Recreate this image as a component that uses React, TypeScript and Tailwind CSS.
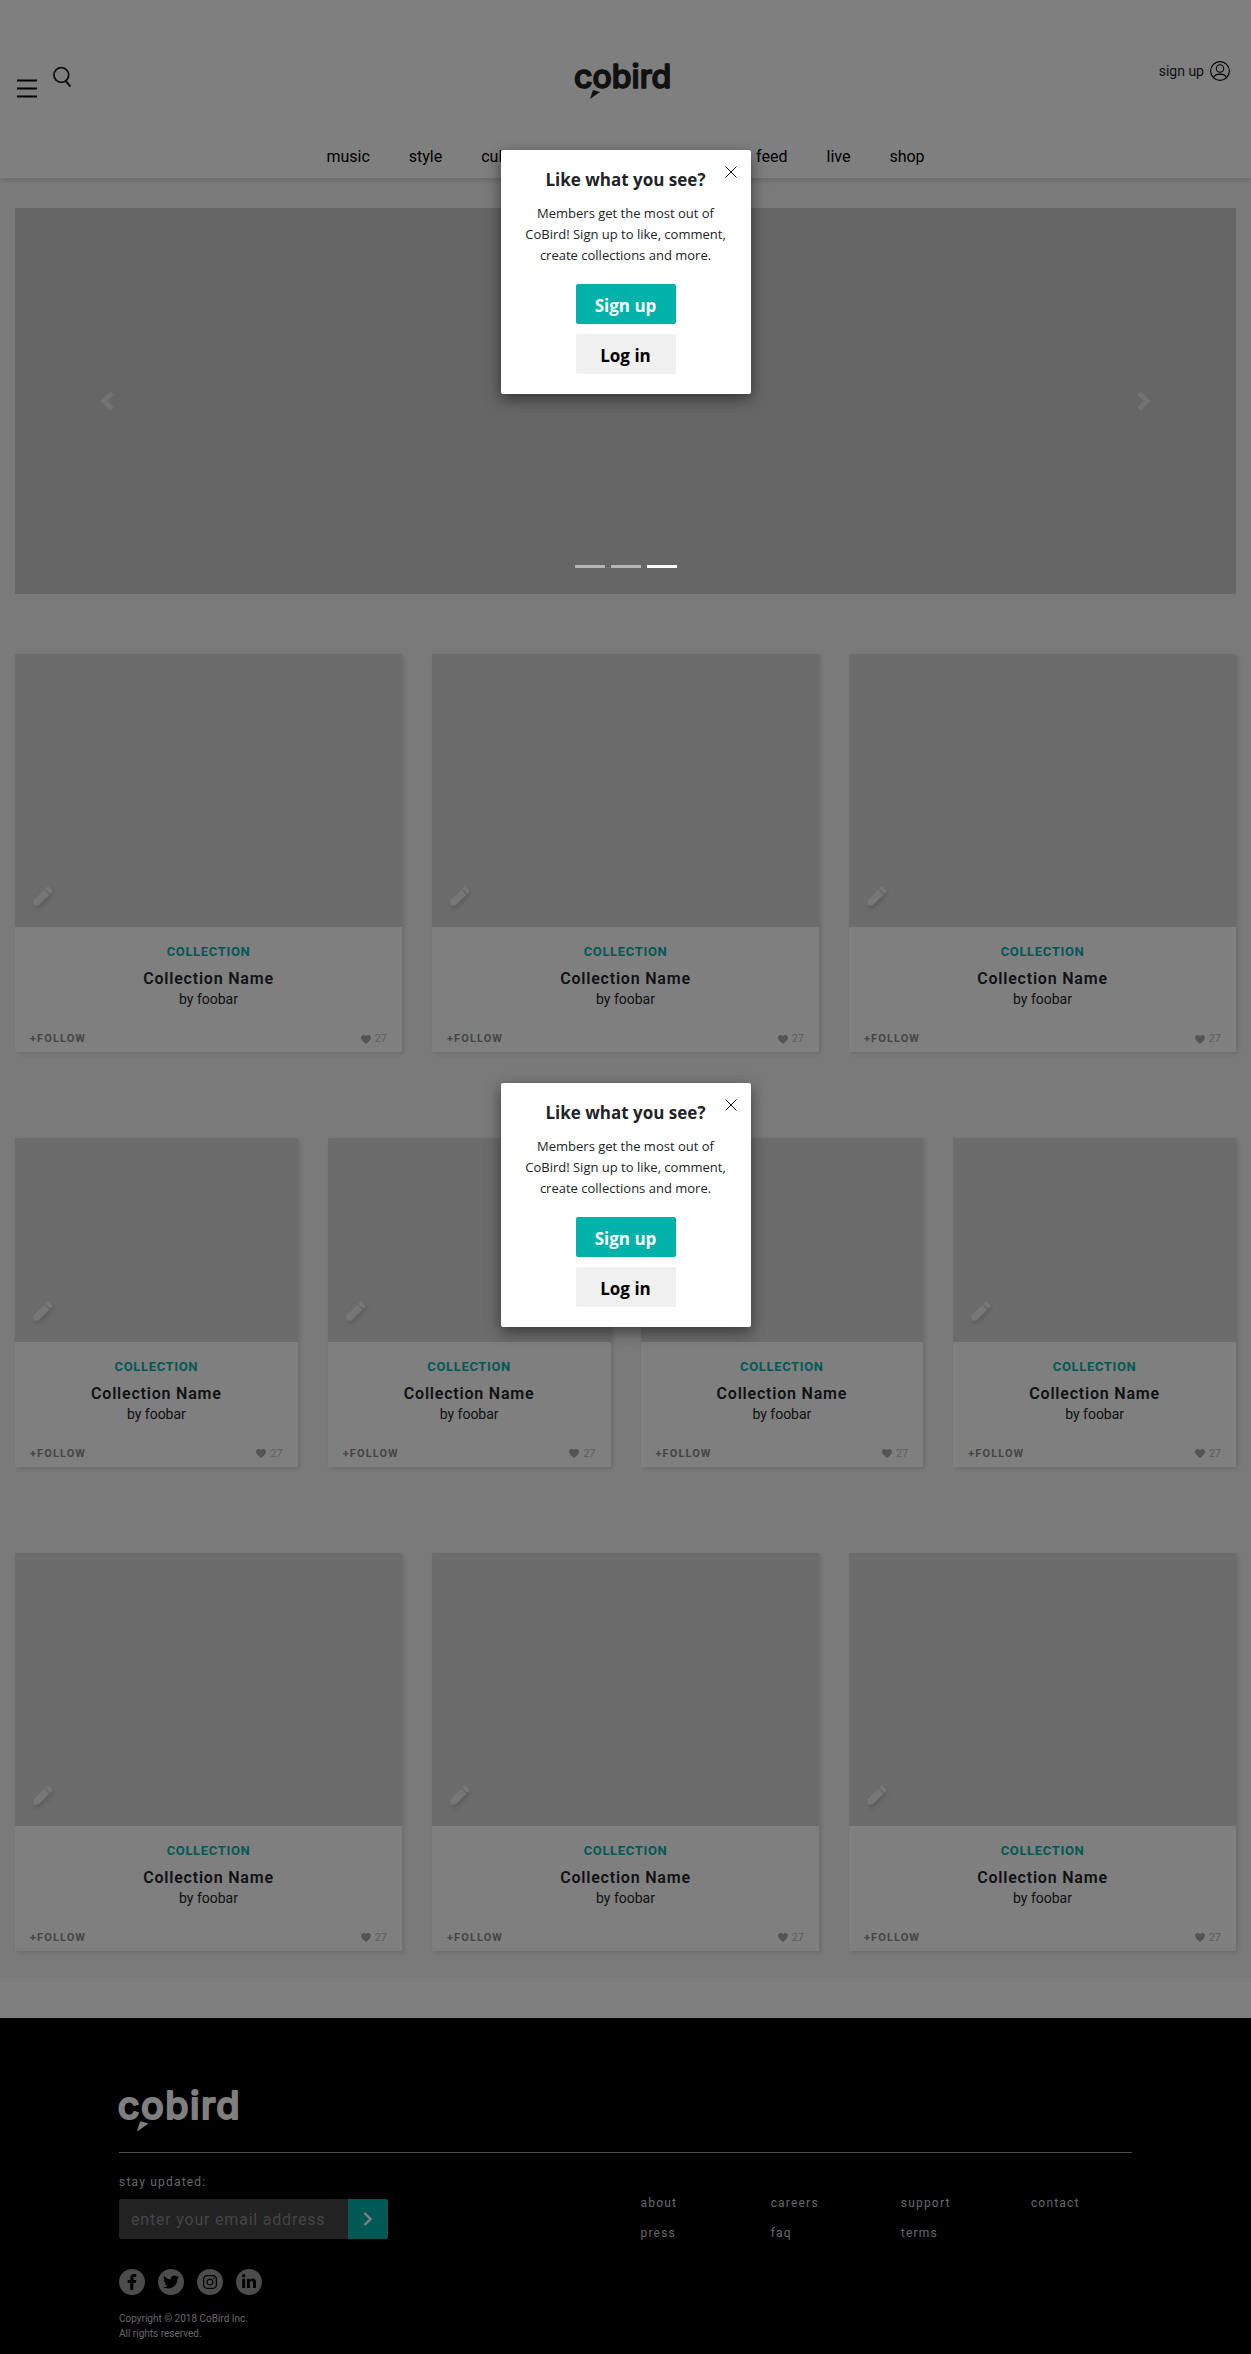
import React from "react";
import { FaFacebookF, FaTwitter, FaInstagram, FaLinkedinIn } from "react-icons/fa";

function Logo({ className }: { className: string }) {
  return (
    <svg viewBox="0 0 100 37" className={className} role="img" aria-label="cobird" fill="currentColor">
      <text
        x="-1"
        y="26"
        fontFamily="Inter, sans-serif"
        fontWeight="500"
        fontSize="32"
        stroke="currentColor"
        strokeWidth="1.6"
        strokeLinejoin="round"
      >
        cobird
      </text>
      <path d="M18 28 L25 30 L15 37 Z" />
    </svg>
  );
}

function Pencil() {
  return (
    <svg viewBox="0 0 20 20" className="size-5 drop-shadow-[1px_3px_2px_rgba(0,0,0,0.15)]" fill="#efefef" aria-hidden="true">
      <path d="M0.5 19.5 V14.5 L11.3 3.7 L16.3 8.7 L5.5 19.5 Z" />
      <path d="M12.2 2.8 L14 1 Q15 0.2 16 1 L19 4 Q19.8 5 19 6 L17.2 7.8 Z" />
    </svg>
  );
}

function Card() {
  return (
    <article className="bg-white shadow-[2px_2px_4px_rgba(0,0,0,0.12)]">
      <div className="relative bg-[#d8d8d8] pb-[15px]">
        <div className="aspect-[3/2]" />
        <button aria-label="Edit collection" className="absolute bottom-[21px] left-[18px]">
          <Pencil />
        </button>
      </div>
      <div className="flex h-[125px] flex-col items-center px-[15px] pt-[15px] text-center">
        <p className="text-[13px] leading-5 font-bold tracking-wider text-[#00b2aa]">COLLECTION</p>
        <h3 className="mt-[7px] text-base leading-5 font-semibold tracking-wider text-[#212529]">Collection Name</h3>
        <p className="text-sm leading-5 text-[#212529]">by foobar</p>
        <div className="mt-auto mb-[5px] flex w-full items-center justify-between text-[11px] leading-4">
          <button className="font-bold tracking-widest text-[#8a8a8a]">+FOLLOW</button>
          <span className="flex items-center gap-1 text-[#bbb]">
            <svg viewBox="0 0 10 9" className="h-[9px] w-[10px]" fill="#a8a8a8" aria-hidden="true">
              <path d="M5 9 C2 6.6 0 5 0 2.6 C0 1 1.2 0 2.6 0 C3.6 0 4.5 0.5 5 1.4 C5.5 0.5 6.4 0 7.4 0 C8.8 0 10 1 10 2.6 C10 5 8 6.6 5 9 Z" />
            </svg>
            27
          </span>
        </div>
      </div>
    </article>
  );
}

function CardRow({ count, className }: { count: number; className: string }) {
  return (
    <section className={className}>
      {Array.from({ length: count }, (_, i) => (
        <Card key={i} />
      ))}
    </section>
  );
}

function Modal({ className }: { className: string }) {
  return (
    <div
      role="dialog"
      aria-label="Like what you see?"
      className={
        "absolute left-1/2 z-40 flex w-[250px] -translate-x-1/2 flex-col items-center rounded-[2px] bg-white px-4 pt-4 pb-5 text-center font-['Open_Sans',sans-serif] shadow-[0_5px_15px_rgba(0,0,0,0.5)] " +
        className
      }
    >
      <button aria-label="Close" className="absolute top-4 right-[14px]">
        <svg viewBox="0 0 12 12" className="size-3" stroke="#111" strokeWidth="1" aria-hidden="true">
          <path d="M0.5 0.5 L11.5 11.5 M11.5 0.5 L0.5 11.5" />
        </svg>
      </button>
      <h2 className="text-[17px] leading-7 font-bold text-[#212529]">Like what you see?</h2>
      <p className="mt-[9px] text-[13px] leading-[21px] text-[#212529]">
        Members get the most out of
        <br />
        CoBird! Sign up to like, comment,
        <br />
        create collections and more.
      </p>
      <button className="mt-[18px] h-10 w-[100px] rounded-[2px] bg-[#00b2aa] pt-1 text-[17px] font-bold text-white">Sign up</button>
      <button className="mt-[10px] h-10 w-[100px] rounded-[2px] bg-[#f0f0f0] pt-1 text-[17px] font-bold text-black">Log in</button>
    </div>
  );
}

function Chevron({ flip }: { flip?: boolean }) {
  return (
    <svg viewBox="0 0 14 20" className={flip ? "h-5 w-[14px] rotate-180" : "h-5 w-[14px]"} fill="none" stroke="#e6e6e6" strokeWidth="5" aria-hidden="true">
      <path d="M12 2 L4 10 L12 18" />
    </svg>
  );
}

const socials = [
  { label: "Facebook", Icon: FaFacebookF },
  { label: "Twitter", Icon: FaTwitter },
  { label: "Instagram", Icon: FaInstagram },
  { label: "LinkedIn", Icon: FaLinkedinIn },
];

export default function App() {
  return (
    <div className="relative overflow-hidden bg-white font-[Roboto,sans-serif] text-[#212529]">
      <header className="relative flex h-[178px] flex-col justify-between bg-white shadow-[0_2px_5px_rgba(0,0,0,0.15)]">
        <div className="grid grid-cols-3 items-start px-[17px] pt-[61px]">
          <div className="flex items-start gap-4">
            <button aria-label="Menu" className="mt-[17px]">
              <svg viewBox="0 0 20 20" className="size-5" stroke="#000" strokeWidth="2" aria-hidden="true">
                <path d="M0 2.5 H20 M0 10.5 H20 M0 18.5 H20" />
              </svg>
            </button>
            <button aria-label="Search" className="mt-[5px]">
              <svg viewBox="0 0 20 22" className="h-[22px] w-5" fill="none" stroke="#222" strokeWidth="1.8" aria-hidden="true">
                <circle cx="8.3" cy="9" r="7.4" />
                <path d="M12.4 14.5 L17.4 20.6" strokeWidth="2.2" />
              </svg>
            </button>
          </div>
          <a href="#home" className="justify-self-center pt-px text-[#222]">
            <Logo className="h-[37px] w-[100px] overflow-visible" />
          </a>
          <a href="#signup" className="mr-1 flex items-center gap-[6px] justify-self-end text-sm leading-5">
            sign up
            <svg viewBox="0 0 20 20" className="size-5" fill="none" stroke="#000" strokeWidth="1.1" aria-hidden="true">
              <circle cx="10" cy="10" r="9.4" />
              <circle cx="10" cy="7.5" r="3.7" />
              <path d="M3.6 16.6 C5 12 15 12 16.4 16.6" />
            </svg>
          </a>
        </div>
        <nav className="flex justify-center gap-[39px] pb-[9px] text-base leading-6 text-black">
          <a href="#music">music</a>
          <a href="#style">style</a>
          <a href="#culture">culture</a>
          <a href="#feed" className="ml-[187px]">feed</a>
          <a href="#live">live</a>
          <a href="#shop">shop</a>
        </nav>
      </header>

      <main className="bg-[#f4f4f4] px-[15px] pt-[30px] pb-[27px]">
        <section aria-label="Featured" className="relative flex h-[386px] items-center justify-between bg-[#ccc] px-[85px]">
          <button aria-label="Previous">
            <Chevron />
          </button>
          <button aria-label="Next">
            <Chevron flip />
          </button>
          <div className="absolute bottom-[26px] left-1/2 z-30 flex -translate-x-1/2 gap-[6px]">
            <button aria-label="Slide 1" className="h-[3px] w-[30px] bg-white/50" />
            <button aria-label="Slide 2" className="h-[3px] w-[30px] bg-white/50" />
            <button aria-label="Slide 3" className="h-[3px] w-[30px] bg-white" />
          </div>
        </section>
        <div className="mt-[60px] flex flex-col gap-[86px]">
          <CardRow count={3} className="grid grid-cols-3 gap-[30px]" />
          <CardRow count={4} className="grid grid-cols-4 gap-[30px]" />
          <CardRow count={3} className="grid grid-cols-3 gap-[30px]" />
        </div>
      </main>

      <footer className="mt-10 bg-black px-[119px] pt-[70px] pb-[14px] text-xs tracking-widest text-[#ccc]">
        <a href="#home" className="block w-[118px] text-white">
          <Logo className="h-[44px] w-[118px] overflow-visible" />
        </a>
        <div className="mt-5 grid grid-cols-2 border-t border-[#999] pt-[19px]">
          <div>
            <label htmlFor="email" className="block leading-5">stay updated:</label>
            <form className="mt-[7px] flex items-center" onSubmit={(e) => e.preventDefault()}>
              <input
                id="email"
                type="email"
                placeholder="enter your email address"
                className="h-10 w-[229px] rounded-l-[2px] bg-[#444] px-3 pt-[2px] text-base tracking-wider text-white placeholder:text-[#8a8a8a]"
              />
              <button aria-label="Subscribe" className="flex size-10 items-center justify-center rounded-r-[2px] bg-[#00b2aa]">
                <svg viewBox="0 0 10 14" className="h-[14px] w-[10px]" fill="none" stroke="#fff" strokeWidth="2.4" aria-hidden="true">
                  <path d="M1.5 1 L7.5 7 L1.5 13" />
                </svg>
              </button>
            </form>
            <div className="mt-[30px] flex gap-[13px]">
              {socials.map(({ label, Icon }) => (
                <a key={label} href={"#" + label.toLowerCase()} aria-label={label} className="flex size-[26px] items-center justify-center rounded-full bg-[#999] text-black">
                  <Icon className="size-4" />
                </a>
              ))}
            </div>
            <p className="mt-4 text-[10px] leading-[15px] tracking-normal">
              Copyright © 2018 CoBird Inc.
              <br />
              All rights reserved.
            </p>
          </div>
          <div className="-mr-[29px] grid grid-cols-4 content-start gap-y-[10px] pt-[21px] pl-[15px] leading-5">
            {["about", "careers", "support", "contact", "press", "faq", "terms"].map((t) => (
              <a key={t} href={"#" + t}>
                {t}
              </a>
            ))}
          </div>
        </div>
      </footer>

      <div className="absolute inset-0 z-20 bg-black/50" />
      <Modal className="top-[150px]" />
      <Modal className="top-[1083px]" />
    </div>
  );
}
